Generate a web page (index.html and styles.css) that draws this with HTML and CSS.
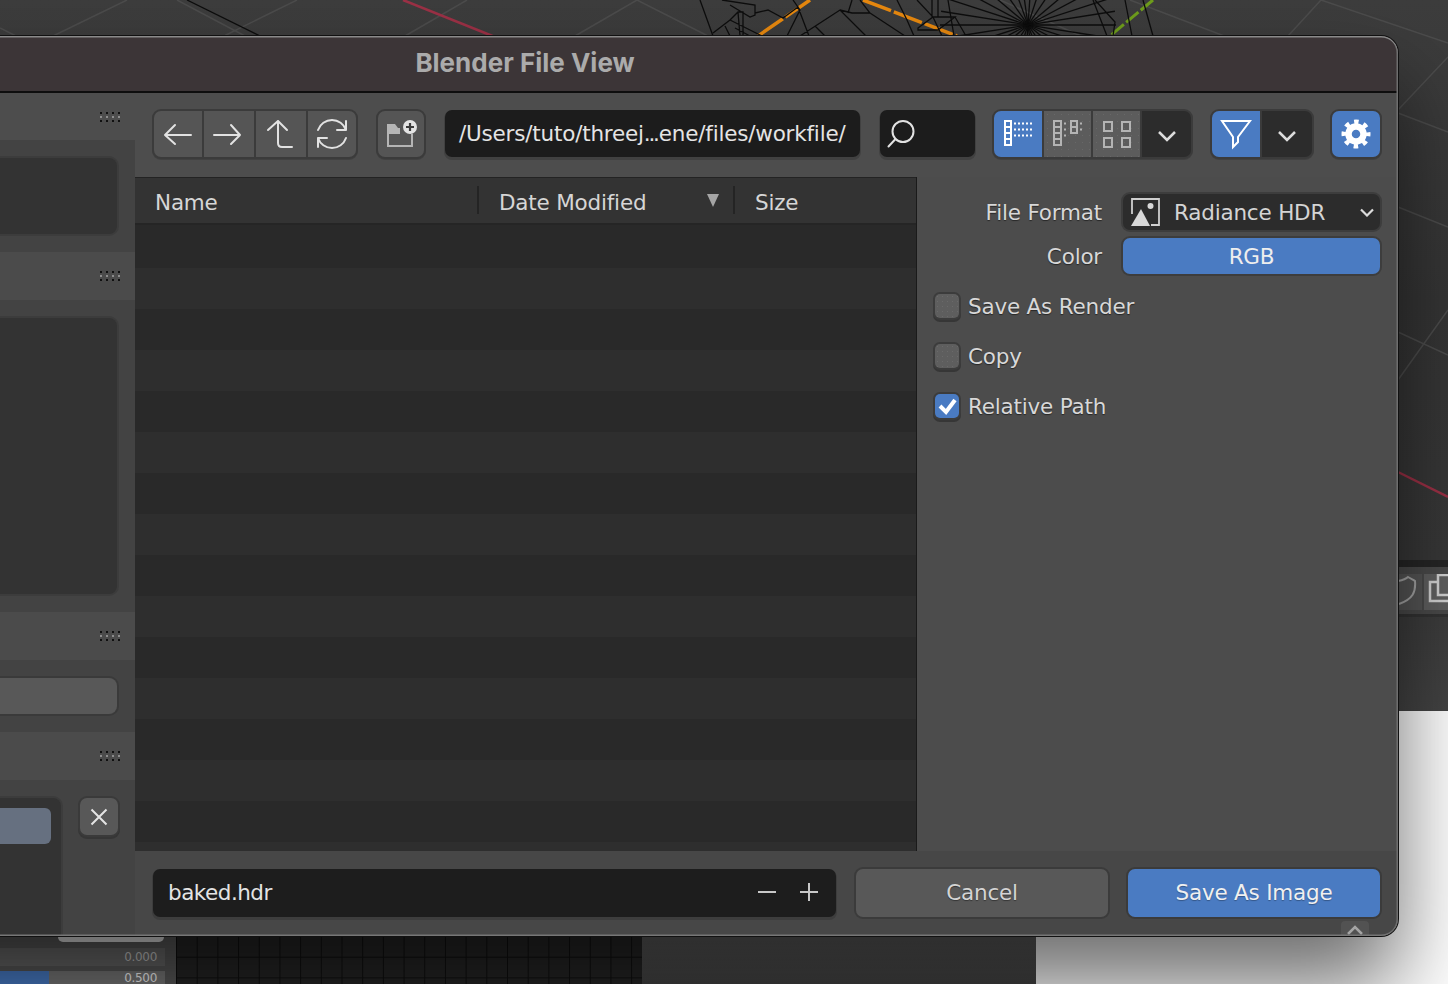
FILE: index.html
```html
<!DOCTYPE html>
<html lang="en">
<head>
<meta charset="utf-8">
<title>Blender File View</title>
<link rel="stylesheet" href="styles.css">
</head>
<body>
<div class="desktop">
  <div class="viewport">
    <svg class="scene" width="1448" height="711" viewBox="0 0 1448 711">
      <g class="grid-lines">
        <path d="M127 0L53 36M177 0L245 36M297 0L224 36M467 0L405 36M637 0L575 36M637 0L708 36M0 28L16 36"/>
        <path d="M1321 0L1288 36M1321 0L1448 43M1398 110L1448 57M1398 113L1448 132M1398 207L1448 227M1398 332L1448 355M1398 380L1448 310M1000 0L1180 80M1130 0L1240 42"/>
      </g>
      <path class="axis-red" d="M403 0L495 37M1398 472L1448 497"/>
      <path class="axis-orange" d="M810 0L758 36M863 0L957 36"/>
      <path class="axis-green" d="M1153 0L1110 36"/>
      <g class="mesh">
        <path d="M187 0L262 37"/>
        <path d="M700 0L713 36M722 0L755 5V15L750 17L730 5M755 13L768 10L783 18L798 7L809 36M713 33L730 20L738 12H743V36M730 20L762 36M738 12L740 36M725 26L730 36M735 28L750 36M793 0L800 10L787 36M800 36L840 10L866 36M815 26L825 36M840 10L852 13H870L860 0M852 0L848 13M870 13L905 36M897 0L907 20L914 36M917 0L933 17L942 36M918 28L933 17H955L938 30H918ZM955 17L966 36M932 0V17M938 0V17M948 0L954 36M1095 0L1115 22L1113 36M1143 0L1153 36M1093 0L1107 36M1125 0L1132 36"/>
        <line x1="-88" x2="88" transform="translate(1028 25) rotate(0)"/>
        <line x1="-88" x2="88" transform="translate(1028 25) rotate(9)"/>
        <line x1="-88" x2="88" transform="translate(1028 25) rotate(18)"/>
        <line x1="-88" x2="88" transform="translate(1028 25) rotate(28)"/>
        <line x1="-70" x2="70" transform="translate(1028 25) rotate(40)"/>
        <line x1="-70" x2="70" transform="translate(1028 25) rotate(55)"/>
        <line x1="-70" x2="70" transform="translate(1028 25) rotate(70)"/>
        <line x1="-70" x2="70" transform="translate(1028 25) rotate(82)"/>
        <line x1="-70" x2="70" transform="translate(1028 25) rotate(94)"/>
        <line x1="-70" x2="70" transform="translate(1028 25) rotate(108)"/>
        <line x1="-70" x2="70" transform="translate(1028 25) rotate(124)"/>
        <line x1="-70" x2="70" transform="translate(1028 25) rotate(140)"/>
        <line x1="-88" x2="88" transform="translate(1028 25) rotate(152)"/>
        <line x1="-88" x2="88" transform="translate(1028 25) rotate(162)"/>
        <line x1="-88" x2="88" transform="translate(1028 25) rotate(171)"/>
      </g>
    </svg>
  </div>
  <div class="side-strip">
    <div class="strip-tools">
      <div class="strip-btn strip-shield">
        <svg width="26" height="36" viewBox="0 0 26 36"><path d="M2 7C7 6 10 5 12 3C15 5 18 6 19 7C20 18 17 25 3 30"/></svg>
      </div>
      <div class="strip-btn">
        <svg width="30" height="36" viewBox="0 0 30 36"><path d="M13 8H6V27H30M14 1H30V21H14Z"/></svg>
      </div>
    </div>
  </div>
  <div class="below-left">
    <div class="below-tab"></div>
    <div class="value-row"><span>0.000</span></div>
    <div class="value-row value-row-fill"><i class="value-fill"></i><span>0.500</span></div>
  </div>
  <div class="below-grid"></div>
  <div class="below-dark"></div>

  <section class="window">
    <header class="titlebar"><h1 class="title">Blender File View</h1></header>
    <div class="window-body">
      <aside class="sidebar">
        <div class="panel-head panel-head-first"><span class="grip"></span></div>
        <div class="panel-body body-a"><div class="box box-fill"></div></div>
        <div class="panel-head"><span class="grip"></span></div>
        <div class="panel-body body-b"><div class="box box-fill"></div></div>
        <div class="panel-head"><span class="grip"></span></div>
        <div class="panel-body body-c"><div class="wide-btn"></div></div>
        <div class="panel-head"><span class="grip"></span></div>
        <div class="panel-body body-d">
          <div class="box list-box"><div class="list-active"></div></div>
          <div class="close-btn">
            <svg width="18" height="18" viewBox="0 0 18 18"><path d="M1.5 1.5L16.5 16.5M16.5 1.5L1.5 16.5"/></svg>
          </div>
        </div>
      </aside>

      <main class="main">
        <div class="toolbar">
          <div class="group nav-group">
            <button class="cell cell-gray w48"><svg class="ic" width="48" height="46" viewBox="0 0 48 46"><path d="M11 24H37M21 14L11 24L21 33"/></svg></button>
            <button class="cell cell-gray w50"><svg class="ic" width="50" height="46" viewBox="0 0 50 46"><path d="M10 24H36M27 14L36 24L27 33"/></svg></button>
            <button class="cell cell-gray w50"><svg class="ic" width="50" height="46" viewBox="0 0 50 46"><path d="M12 19L22 10L31 19M22 10V32Q22 36 26 36H36"/></svg></button>
            <button class="cell cell-gray w48"><svg class="ic" width="48" height="46" viewBox="0 0 48 46"><path d="M10 19A14.8 14.8 0 0 1 38 19M38 10V19H29M38 27A14.8 14.8 0 0 1 10 27M10 36V27H19"/></svg></button>
          </div>
          <div class="group nav-group">
            <button class="cell cell-gray cell-single">
              <svg width="46" height="46" viewBox="0 0 46 46"><path class="folder-tab" d="M9 13H17L20 17H22V23H9Z"/><path class="folder-line" d="M10 22V35H34V23"/><circle class="plus-disc" cx="32" cy="16" r="7"/><path class="plus-mark" d="M32 12V20M28 16H36"/></svg>
            </button>
          </div>
          <div class="path-field">/Users/tuto/threej<span class="ell">...</span>ene/files/workfile/</div>
          <div class="search-field">
            <svg class="ic" width="30" height="30" viewBox="0 0 30 30"><circle cx="17" cy="13.5" r="10.5"/><path d="M9.5 21L2.5 28.5"/></svg>
          </div>
          <div class="group view-group">
            <button class="cell cell-blue w48">
              <svg class="view-ic view-on" width="48" height="46" viewBox="0 0 48 46"><path class="cols" d="M11 10H17V34H11ZM11 16H17M11 22H17M11 28H17"/><path class="dots" d="M20 12.500H38M20 18.500H38M20 24.500H38"/></svg>
            </button>
            <button class="cell cell-dim w47">
              <svg class="view-ic" width="47" height="46" viewBox="0 0 47 46"><path class="cols" d="M10 10H17V34H10ZM10 16H17M10 22H17M10 28H17M27 10H33V22H27ZM27 16H33"/><path class="dots" d="M20 12.500H23M20 18.500H23M20 24.500H23M36 12.500H39M36 18.500H39"/></svg>
            </button>
            <button class="cell cell-dim w47">
              <svg class="view-ic" width="47" height="46" viewBox="0 0 47 46"><path class="cols" d="M11 11H19V20H11ZM29 11H37V20H29ZM11 27H19V36H11ZM29 27H37V36H29Z"/></svg>
            </button>
            <button class="cell cell-dark w49"><svg class="chev" width="20" height="12" viewBox="0 0 20 12"><path d="M2 2L10 10L18 2"/></svg></button>
          </div>
          <div class="group filter-group">
            <button class="cell cell-blue w48">
              <svg class="funnel" width="48" height="46" viewBox="0 0 48 46"><path d="M10 10H38L26 26V31L21 36V26Z"/></svg>
            </button>
            <button class="cell cell-dark w50"><svg class="chev" width="20" height="12" viewBox="0 0 20 12"><path d="M2 2L10 10L18 2"/></svg></button>
          </div>
          <div class="group">
            <button class="cell cell-blue cell-single w48">
              <svg class="gear" width="32" height="32" viewBox="0 0 32 32"><circle class="gear-body" cx="16" cy="16" r="7.500"/><circle class="gear-teeth" cx="16" cy="16" r="12"/></svg>
            </button>
          </div>
        </div>

        <div class="content">
          <div class="files">
            <div class="files-head">
              <div class="col col-name">Name</div>
              <div class="col col-date">Date Modified<span class="sort-mark"></span></div>
              <div class="col col-size">Size</div>
            </div>
            <div class="rows">
              <div class="row"></div><div class="row"></div><div class="row"></div><div class="row"></div>
              <div class="row"></div><div class="row"></div><div class="row"></div><div class="row"></div>
              <div class="row"></div><div class="row"></div><div class="row"></div><div class="row"></div>
              <div class="row"></div><div class="row"></div><div class="row"></div><div class="row"></div>
            </div>
          </div>
          <div class="props">
            <div class="prop-row">
              <label class="prop-label">File Format</label>
              <div class="select">
                <svg class="img-ic" width="30" height="30" viewBox="0 0 30 30"><path class="img-frame" d="M2 17V2H29V28H21"/><path class="img-peak" d="M1 29L11 12L20 29Z"/><circle class="img-peak" cx="20.500" cy="9" r="3"/></svg>
                <span class="select-text">Radiance HDR</span>
                <svg class="chev-small" width="14" height="9" viewBox="0 0 14 9"><path d="M1 1.500L7 7.500L13 1.500"/></svg>
              </div>
            </div>
            <div class="prop-row prop-row-next">
              <label class="prop-label">Color</label>
              <div class="toggle-on">RGB</div>
            </div>
            <div class="checks">
              <div class="check-row"><span class="check"></span>Save As Render</div>
              <div class="check-row"><span class="check"></span>Copy</div>
              <div class="check-row"><span class="check check-on"><svg width="24" height="24" viewBox="0 0 24 24"><path d="M5 12L11 18L20 6"/></svg></span>Relative Path</div>
            </div>
          </div>
        </div>

        <footer class="footer">
          <div class="name-field">
            <span class="name-text">baked.hdr</span>
            <svg class="pm" width="18" height="18" viewBox="0 0 18 18"><path d="M0 9H18"/></svg>
            <svg class="pm" width="18" height="18" viewBox="0 0 18 18"><path d="M0 9H18M9 0V18"/></svg>
          </div>
          <button class="action action-cancel">Cancel</button>
          <button class="action action-save">Save As Image</button>
        </footer>
      </main>
    </div>
    <div class="corner-tab"><svg width="16" height="10" viewBox="0 0 16 10"><path d="M1 9L8 2L15 9"/></svg></div>
  </section>
</div>
</body>
</html>
```

FILE: styles.css
```css
* { box-sizing: border-box; }
html, body { margin: 0; padding: 0; height: 100%; overflow: hidden; background: #fff; }
body { font-family: "DejaVu Sans", sans-serif; font-size: 21.5px; letter-spacing: -0.2px; color: #dcdcdc; }
svg { display: block; flex: none; fill: none; }
button { font: inherit; letter-spacing: inherit; color: inherit; border: 0; padding: 0; margin: 0; }

.desktop { position: relative; width: 1448px; height: 984px; overflow: hidden; background: #fff; }

/* Things behind the dialog */
.viewport { position: absolute; left: 0; top: 0; width: 1448px; height: 711px; background: linear-gradient(#3d3d3d, #353535 300px, #383838 560px, #444 711px); }
.scene { position: absolute; left: 0; top: 0; }
.grid-lines path { stroke: #4c4c4c; stroke-width: 1.5; }
.axis-red { stroke: #9c3146; stroke-width: 2.5; }
.axis-orange { stroke: #e8890f; stroke-width: 3.5; stroke-dasharray: 30 3; }
.axis-green { stroke: #6f9e1c; stroke-width: 3; stroke-dasharray: 16 3; }
.mesh path, .mesh line { stroke: #0d0d0d; stroke-width: 1.3; fill: none; }

.side-strip { position: absolute; left: 1398px; top: 560px; width: 50px; height: 57px; background: #4a4a4a; border-top: 7px solid #262626; border-bottom: 3px solid #333; }
.strip-tools { display: flex; gap: 2px; padding-top: 7px; }
.strip-btn { width: 24px; height: 36px; background: #565656; overflow: hidden; flex: none; }
.strip-btn + .strip-btn { width: 30px; background: #606060; }
.strip-shield svg { margin-left: -2px; }
.strip-btn path { stroke: #a8a8a8; stroke-width: 2; }
.strip-btn + .strip-btn path { stroke: #d4d4d4; stroke-width: 2.5; }

.below-left { position: absolute; left: 0; top: 936px; width: 176px; height: 48px; background: #5a5a5a; }
.below-tab { margin-left: 58px; width: 106px; height: 6px; background: #e6e6e6; border-radius: 0 0 5px 5px; }
.value-row { position: relative; display: flex; justify-content: flex-end; align-items: center; width: 165px; height: 18px; margin-top: 6px; padding-right: 8px; background: #6a6a6a; font-size: 12px; letter-spacing: -0.3px; line-height: 12px; color: #c8c8c8; }
.value-row-fill { height: 13px; margin-top: 5px; padding-top: 1px; background: #7a7a7a; color: #fff; align-items: flex-start; }
.value-fill { position: absolute; left: 0; top: 0; bottom: 0; width: 49px; background: #4a7fcb; }
.value-row span { position: relative; }
.below-grid { position: absolute; left: 176px; top: 936px; width: 466px; height: 48px; background-color: #262626; background-image: linear-gradient(90deg, #0f0f0f 1px, transparent 1px), linear-gradient(#0f0f0f 1px, transparent 1px); background-size: 20.700px 20.700px; }
.below-dark { position: absolute; left: 642px; top: 936px; width: 394px; height: 48px; background: linear-gradient(#606060, #424242); }

/* Dialog */
.window { position: absolute; left: -348px; top: 36px; width: 1746px; height: 900px; display: flex; flex-direction: column; overflow: hidden; border-radius: 17px; background: #4d4d4d; box-shadow: 0 0 0 1px #111, 0 50px 88px rgba(0, 0, 0, .58); }
.window::after { content: ""; position: absolute; inset: 0; border-radius: 17px; box-shadow: inset 0 1.5px 0 #8a8a8a, inset -1.5px 0 0 #6e6e6e, inset 0 -1.5px 0 #777; pointer-events: none; }

.titlebar { flex: none; height: 57px; display: flex; align-items: center; justify-content: center; padding-bottom: 2px; background: #3c3537; border-bottom: 2px solid #0e0e0e; }
.title { margin: 0; font-family: Inter, "Liberation Sans", sans-serif; font-size: 26px; font-weight: 700; letter-spacing: 0; color: #ababab; }

.window-body { flex: 1; min-height: 0; display: flex; }

/* Left column */
.sidebar { flex: none; width: 483px; display: flex; flex-direction: column; background: #434343; }
.panel-head { flex: none; height: 48px; display: flex; align-items: center; justify-content: flex-end; padding-right: 15px; background: #4b4b4b; }
.panel-head-first { height: 47px; background: #4d4d4d; }
.grip { display: block; width: 20px; height: 10px; background: linear-gradient(#101010 0 2px, transparent 2px 4px, #8d8d8d 4px 6px, transparent 6px 8px, #101010 8px); -webkit-mask-image: repeating-linear-gradient(90deg, #000 0 2px, transparent 2px 6px); mask-image: repeating-linear-gradient(90deg, #000 0 2px, transparent 2px 6px); }
.panel-body { flex: none; display: flex; padding: 18px 18px 18px 0; }
.body-a { height: 112px; }
.body-b { height: 312px; }
.body-c { height: 72px; }
.body-d { flex: 1; gap: 19px; padding-bottom: 0; padding-right: 17px; }
.box { background: #333; border-radius: 8px; box-shadow: 0 0 0 2px #3c3c3c; }
.box-fill { flex: 1; }
.wide-btn { flex: 1; background: #585858; border-radius: 8px; box-shadow: 0 0 0 2px #3a3a3a; }
.list-box { flex: 1; padding-top: 10px; padding-right: 10px; border-radius: 8px 8px 0 0; }
.list-active { height: 36px; background: #667080; border-radius: 0 6px 6px 0; }
.close-btn { flex: none; width: 38px; height: 37px; display: flex; align-items: center; justify-content: center; background: #585858; border-radius: 7px; box-shadow: 0 0 0 2px #3a3a3a, 0 2px 0 2px #363636; }
.close-btn path { stroke: #e4e4e4; stroke-width: 2; }

/* Toolbar */
.main { flex: 1; min-width: 0; display: flex; flex-direction: column; }
.toolbar { flex: none; height: 84px; display: flex; align-items: flex-start; padding: 16px 0 0 17px; }
.group { flex: none; height: 50px; display: flex; gap: 2px; padding: 2px; background: #3b3b3b; border-radius: 9px; box-shadow: 0 1px 0 #414141; margin-right: 16px; }
.nav-group { margin-right: 18px; }
.view-group { margin-right: 17px; }
.filter-group { margin-right: 16px; }
.cell { flex: none; height: 46px; display: flex; align-items: center; justify-content: center; background: #555; }
.w47 { width: 47px; }
.w48 { width: 48px; }
.w49 { width: 49px; }
.w50 { width: 50px; }
.cell:first-child { border-radius: 7px 0 0 7px; }
.cell:last-child { border-radius: 0 7px 7px 0; }
.cell.cell-single { border-radius: 7px; }
.cell-single { width: 46px; }
.cell-single.w48 { width: 48px; }
.cell-blue { background: #4a7bc2; }
.cell-dim { background-color: #5c5c5c; background-image: radial-gradient(circle, #686868 .7px, transparent .8px); background-size: 7px 7px; }
.cell-dark { background: #2c2c2c; }
.ic path, .ic circle { stroke: #e2e2e2; stroke-width: 2; fill: none; stroke-linejoin: round; stroke-linecap: round; }
.folder-tab { fill: #b5b5b5; }
.folder-line { stroke: #b5b5b5; stroke-width: 2; }
.plus-disc { fill: #e4e4e4; }
.plus-mark { stroke: #3c3c3c; stroke-width: 2.2; }
.path-field { flex: none; width: 415px; height: 47px; margin: 1px 20px 0 1px; padding-left: 14px; display: flex; align-items: center; background: #1c1c1c; border-radius: 7px; box-shadow: 0 2px 0 1px #414141; color: #e4e4e4; white-space: nowrap; overflow: hidden; }
.ell { letter-spacing: -2.2px; margin-right: 1px; }
.search-field { flex: none; width: 95px; height: 47px; margin: 1px 17px 0 0; padding: 8px 0 0 6px; background: #1c1c1c; border-radius: 7px; box-shadow: 0 2px 0 1px #414141; }
.cols { stroke: #b4b4b4; stroke-width: 2; }
.dots { stroke: #b4b4b4; stroke-width: 2; stroke-dasharray: 2 2; }
.view-on .cols, .view-on .dots { stroke: #fff; }
.chev { margin-top: 4px; }
.chev path { stroke: #dcdcdc; stroke-width: 2.5; fill: none; }
.chev-small path { stroke: #dcdcdc; stroke-width: 2.2; fill: none; }
.funnel path { stroke: #fff; stroke-width: 2; stroke-linejoin: miter; }
.gear-body { stroke: #fff; stroke-width: 6.500; }
.gear-teeth { stroke: #fff; stroke-width: 5; stroke-dasharray: 4.420 5; stroke-dashoffset: 2.210; }

/* File list */
.content { flex: 1; min-height: 0; display: flex; }
.files { flex: none; width: 782px; display: flex; flex-direction: column; min-height: 0; border-right: 1px solid #1a1a1a; }
.files-head { flex: none; height: 48px; display: flex; align-items: center; background: #333; border-top: 1px solid #232323; border-bottom: 2px solid #252525; }
.col { position: relative; height: 100%; display: flex; align-items: center; padding-top: 4px; color: #d6d6d6; }
.col-name { width: 342px; padding-left: 20px; }
.col-date { width: 256px; padding-left: 22px; }
.col-size { flex: 1; padding-left: 22px; }
.col-date::before, .col-size::before { content: ""; position: absolute; left: 0; top: 8px; height: 28px; width: 2px; background: #242424; }
.sort-mark { position: absolute; left: 230px; top: 16px; width: 0; height: 0; border-left: 6px solid transparent; border-right: 6px solid transparent; border-top: 13px solid #a5a5a5; }
.rows { flex: 1; min-height: 0; overflow: hidden; }
.row { height: 41px; background: #2e2e2e; }
.row:nth-child(odd) { background: #292929; }
.row:first-child { height: 43px; }

/* Properties */
.props { flex: 1; min-width: 0; background: #4c4c4c; padding: 17px 18px 0 16px; }
.prop-row { display: flex; align-items: center; height: 36px; }
.prop-row-next { margin-top: 8px; }
.prop-label { flex: none; width: 169px; text-align: right; margin-right: 21px; color: #d8d8d8; text-shadow: 0 1px 1px rgba(0, 0, 0, .5); }
.select { flex: 1; height: 36px; display: flex; align-items: center; background: #2c2c2c; border-radius: 7px; box-shadow: 0 0 0 2px #3d3d3d; padding-left: 7px; padding-right: 6px; color: #d4d4d4; }
.select-text { flex: 1; padding-left: 14px; }
.img-frame { stroke: #cfcfcf; stroke-width: 1.8; }
.img-peak { fill: #d8d8d8; }
.toggle-on { flex: 1; height: 36px; display: flex; align-items: center; justify-content: center; background: #4a7bc2; border-radius: 7px; box-shadow: 0 0 0 2px #3d3d3d; color: #eee; }
.checks { margin-top: 20px; display: flex; flex-direction: column; gap: 26px; }
.check-row { display: flex; align-items: center; height: 24px; color: #d8d8d8; text-shadow: 0 1px 1px rgba(0, 0, 0, .5); }
.check { flex: none; width: 24px; height: 24px; margin: 0 9px 0 2px; background-color: #5e5e5e; background-image: radial-gradient(circle, #6a6a6a .7px, transparent .8px); background-size: 5px 5px; border-radius: 5px; box-shadow: 0 0 0 2px #3c3c3c, 0 2px 0 2px #363636; }
.check-on { background: #4a7bc2; }
.check-on path { stroke: #fff; stroke-width: 4; }

/* Footer */
.footer { flex: none; height: 85px; display: flex; align-items: flex-start; padding: 18px 0 0 18px; background: #474747; }
.name-field { flex: none; width: 683px; height: 48px; display: flex; align-items: center; padding: 0 18px 2px 15px; background: #1d1d1d; border-radius: 7px; box-shadow: 0 2px 0 1px #3d3d3d; color: #e4e4e4; }
.name-text { flex: 1; letter-spacing: -0.5px; }
.pm { margin-left: 24px; }
.pm path { stroke: #c8c8c8; stroke-width: 2; }
.action { flex: none; width: 252px; height: 48px; margin-left: 20px; padding-bottom: 2px; border-radius: 7px; box-shadow: 0 0 0 2px #3b3b3b; }
.action-cancel { background: #585858; color: #d4d4d4; text-shadow: 0 1px 1px rgba(0, 0, 0, .4); }
.action-save { background: #4a7bc2; color: #f0f0f0; text-shadow: 0 1px 1px rgba(0, 0, 0, .3); }
.corner-tab { position: absolute; right: 29px; bottom: 0; width: 28px; height: 15px; display: flex; justify-content: center; padding-top: 4px; background: #525252; border-radius: 4px 4px 0 0; overflow: hidden; }
.corner-tab path { stroke: #a4a4a4; stroke-width: 2.5; }
```
